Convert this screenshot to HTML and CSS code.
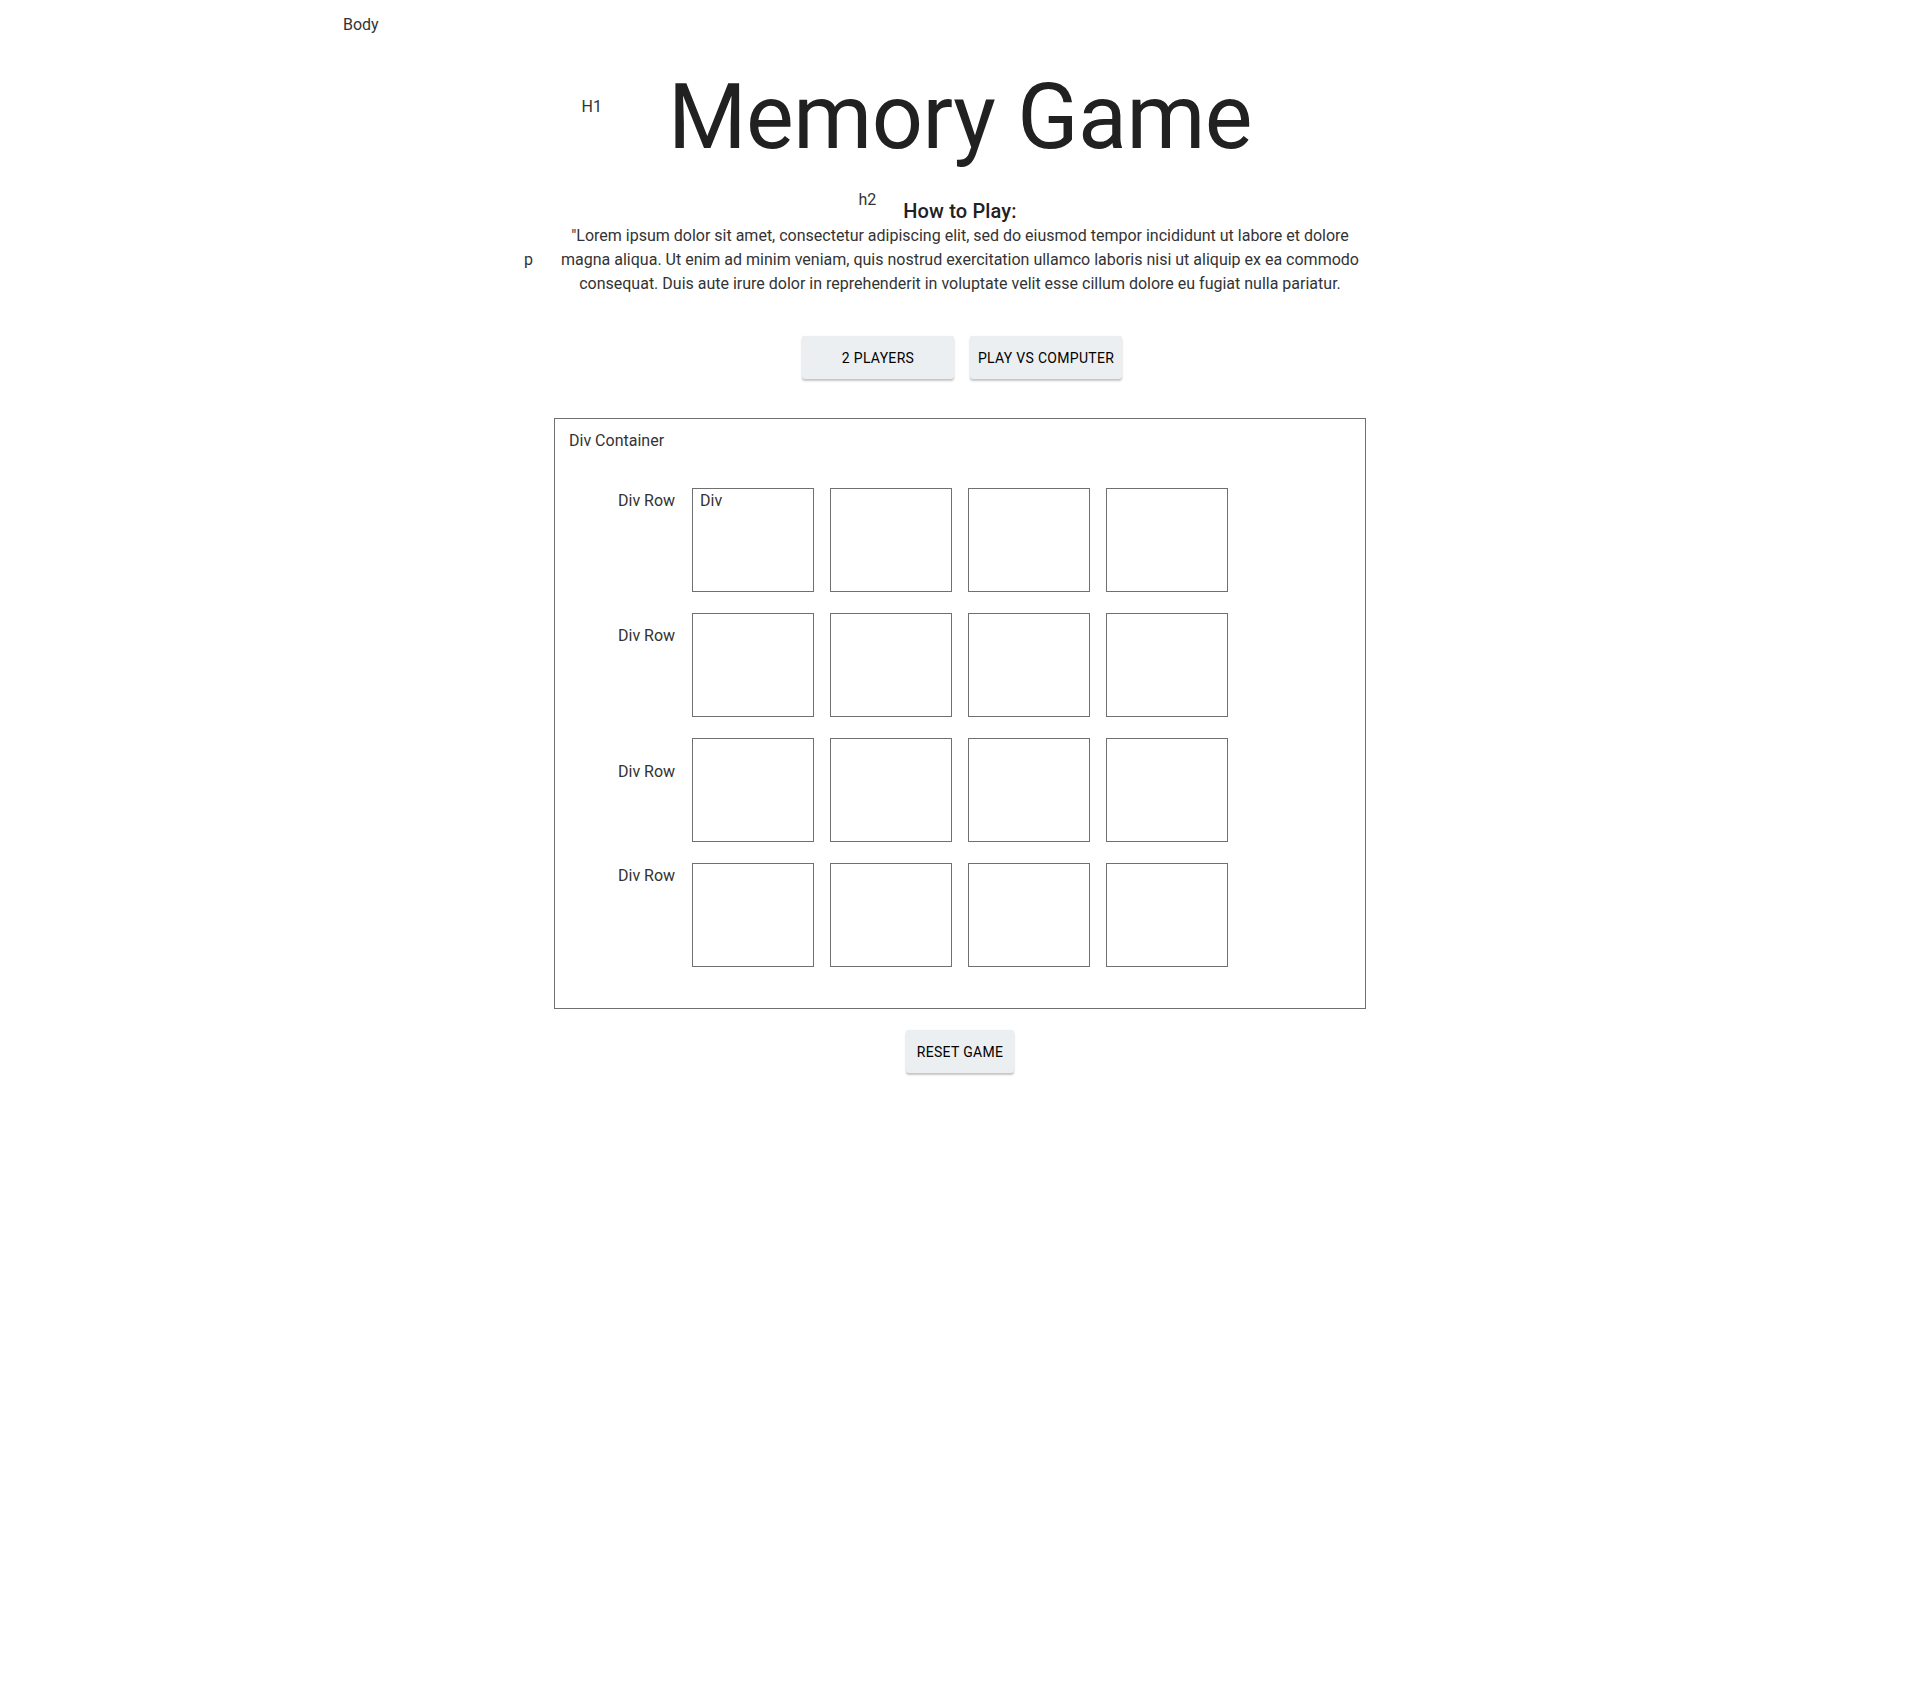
FILE: index.html
```html
<!DOCTYPE html>
<html lang="en">
<head>
<meta charset="utf-8">
<title>Memory Game</title>
<link rel="stylesheet" href="styles.css">
</head>
<body>
<div class="page">
  <div class="body-label">Body</div>

  <div class="tag-row tag-row--h1">
    <span class="tag tag--h1">H1</span>
    <h1 class="title">Memory Game</h1>
    <span></span>
  </div>

  <div class="tag-row tag-row--h2">
    <span class="tag tag--h2">h2</span>
    <h2 class="subtitle">How to Play:</h2>
    <span></span>
  </div>

  <div class="tag-row tag-row--p">
    <span class="tag tag--p">p</span>
    <p class="intro">"Lorem ipsum dolor sit amet, consectetur adipiscing elit, sed do eiusmod tempor incididunt ut labore et dolore magna aliqua. Ut enim ad minim veniam, quis nostrud exercitation ullamco laboris nisi ut aliquip ex ea commodo consequat. Duis aute irure dolor in reprehenderit in voluptate velit esse cillum dolore eu fugiat nulla pariatur.</p>
    <span></span>
  </div>

  <div class="mode-buttons">
    <button class="btn btn--mode">2 Players</button>
    <button class="btn btn--mode">Play vs Computer</button>
  </div>

  <div class="board">
    <div class="board-label">Div Container</div>
    <div class="rows">
      <div class="row">
        <span class="row-label row-label--a">Div Row</span>
        <div class="card"><span class="card-label">Div</span></div>
        <div class="card"></div>
        <div class="card"></div>
        <div class="card"></div>
      </div>
      <div class="row">
        <span class="row-label row-label--b">Div Row</span>
        <div class="card"></div>
        <div class="card"></div>
        <div class="card"></div>
        <div class="card"></div>
      </div>
      <div class="row">
        <span class="row-label row-label--c">Div Row</span>
        <div class="card"></div>
        <div class="card"></div>
        <div class="card"></div>
        <div class="card"></div>
      </div>
      <div class="row">
        <span class="row-label row-label--a">Div Row</span>
        <div class="card"></div>
        <div class="card"></div>
        <div class="card"></div>
        <div class="card"></div>
      </div>
    </div>
  </div>

  <div class="reset-wrap">
    <button class="btn btn--reset">Reset Game</button>
  </div>
</div>
</body>
</html>
```

FILE: styles.css
```css
html, body {
  margin: 0;
  padding: 0;
  background: #ffffff;
}

body {
  font-family: Roboto, "Liberation Sans", Arial, sans-serif;
  color: #212121;
  font-size: 16px;
  line-height: 24px;
}

.page {
  padding-top: 13px;
  padding-bottom: 40px;
}

.body-label {
  margin-left: 343px;
  color: #333333;
  font-size: 16px;
  line-height: 24px;
}

.tag-row {
  display: grid;
  grid-template-columns: 1fr auto 1fr;
  align-items: start;
}

.tag {
  justify-self: end;
  color: #333333;
  font-size: 16px;
  line-height: 24px;
}

.tag-row--h1 {
  margin-top: 31px;
}

.tag--h1 {
  margin-right: 66px;
  margin-top: 27px;
}

.title {
  margin: 0;
  font-size: 90px;
  line-height: 100px;
  font-weight: 400;
  color: #212121;
  letter-spacing: -0.5px;
}

.tag-row--h2 {
  margin-top: 31px;
}

.tag--h2 {
  margin-right: 27px;
  margin-top: -11px;
}

.subtitle {
  margin: 0;
  font-size: 20px;
  line-height: 24px;
  font-weight: 500;
  color: #212121;
  letter-spacing: 0.15px;
}

.tag-row--p {
  margin-top: 1px;
}

.tag--p {
  margin-right: 27px;
  margin-top: 24px;
}

.intro {
  margin: 0;
  width: 800px;
  text-align: center;
  font-size: 16px;
  line-height: 24px;
  color: #333333;
}

.mode-buttons {
  display: flex;
  justify-content: center;
  gap: 16px;
  margin-top: 40px;
  padding-left: 4px;
}

.btn {
  font-family: Roboto, "Liberation Sans", Arial, sans-serif;
  font-size: 14px;
  font-weight: 400;
  text-transform: uppercase;
  letter-spacing: 0.3px;
  color: #000000;
  background: #eceff1;
  border: none;
  border-radius: 3px;
  box-shadow: 0 2px 2px rgba(0, 0, 0, 0.22), 0 0 1px rgba(0, 0, 0, 0.12);
  cursor: pointer;
}

.btn--mode {
  width: 152px;
  height: 43px;
}

.board {
  width: 812px;
  height: 591px;
  box-sizing: border-box;
  margin: 39px auto 0;
  border: 1px solid #707070;
  padding: 10px 14px 0;
}

.board-label {
  color: #333333;
  font-size: 16px;
  line-height: 24px;
}

.rows {
  display: flex;
  flex-direction: column;
  gap: 21px;
  margin-top: 35px;
  padding-left: 49px;
}

.row {
  display: flex;
  align-items: flex-start;
  gap: 16px;
}

.row-label {
  width: 57px;
  margin-right: 1px;
  text-align: right;
  white-space: nowrap;
  color: #333333;
  font-size: 16px;
  line-height: 24px;
}

.row-label--a {
  margin-top: 1px;
}

.row-label--b {
  margin-top: 11px;
}

.row-label--c {
  margin-top: 22px;
}

.card {
  width: 122px;
  height: 104px;
  box-sizing: border-box;
  border: 1px solid #707070;
  padding: 0 7px;
}

.card-label {
  color: #333333;
  font-size: 16px;
  line-height: 24px;
}

.reset-wrap {
  display: flex;
  justify-content: center;
  margin-top: 21px;
}

.btn--reset {
  width: 108px;
  height: 43px;
}
```
